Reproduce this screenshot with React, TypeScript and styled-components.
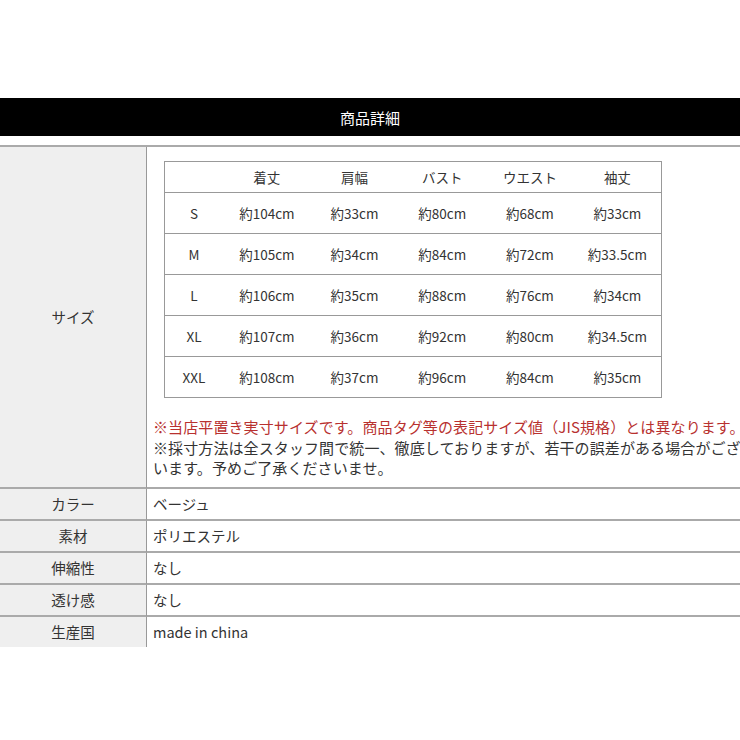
import styled, { createGlobalStyle } from "styled-components";

const Global = createGlobalStyle`
  body {
    margin: 0;
    background: #fff;
    font-family: "Noto Sans CJK JP", "Liberation Sans", sans-serif;
    color: #333;
  }
`;

const Page = styled.div`
  padding-top: 98px;
  width: 740px;
`;

const Title = styled.div`
  background: #000;
  color: #fff;
  height: 38px;
  display: flex;
  align-items: center;
  justify-content: center;
  font-size: 15px;
  margin-bottom: 9px;
`;

const Spec = styled.div`
  display: grid;
  grid-template-columns: 147px 1fr;
  border-top: 2px solid #aaa;
`;

const Label = styled.div<{ $last?: boolean }>`
  background: #efefef;
  border-right: 1px solid #999;
  border-bottom: ${({ $last }) => ($last ? "none" : "2px solid #aaa")};
  display: flex;
  align-items: center;
  justify-content: center;
  font-size: 14.5px;
`;

const Value = styled.div<{ $last?: boolean }>`
  border-bottom: ${({ $last }) => ($last ? "none" : "2px solid #aaa")};
  height: 30px;
  display: flex;
  align-items: center;
  padding-left: 6px;
  font-size: 14.5px;
`;

const SizeCell = styled.div`
  border-bottom: 2px solid #aaa;
  padding: 14px 0 8px 6px;
`;

const SizeTable = styled.table`
  margin-left: 11px;
  width: 498px;
  table-layout: fixed;
  border-collapse: collapse;
  border: 1px solid #999;
  font-size: 13.5px;
  td, th {
    font-weight: normal;
    text-align: center;
    padding: 0;
  }
  th { height: 30px; }
  td { height: 40px; border-top: 1px solid #999; }
  td:first-child, th:first-child { width: 58px; }
`;

const Notes = styled.div`
  margin-top: 19px;
  font-size: 15px;
  line-height: 20.5px;
  letter-spacing: 0.1px;
  padding-right: 4px;
`;

const Red = styled.div`
  color: #b8312f;
  white-space: nowrap;
`;

const heads = ["", "着丈", "肩幅", "バスト", "ウエスト", "袖丈"];
const rows = [
  ["S", "約104cm", "約33cm", "約80cm", "約68cm", "約33cm"],
  ["M", "約105cm", "約34cm", "約84cm", "約72cm", "約33.5cm"],
  ["L", "約106cm", "約35cm", "約88cm", "約76cm", "約34cm"],
  ["XL", "約107cm", "約36cm", "約92cm", "約80cm", "約34.5cm"],
  ["XXL", "約108cm", "約37cm", "約96cm", "約84cm", "約35cm"],
];
const info = [
  ["カラー", "ベージュ"],
  ["素材", "ポリエステル"],
  ["伸縮性", "なし"],
  ["透け感", "なし"],
  ["生産国", "made in china"],
];

export default function App() {
  return (
    <Page>
      <Global />
      <Title>商品詳細</Title>
      <Spec>
        <Label>サイズ</Label>
        <SizeCell>
          <SizeTable>
            <thead>
              <tr>{heads.map((h, i) => <th key={i}>{h}</th>)}</tr>
            </thead>
            <tbody>
              {rows.map((r) => (
                <tr key={r[0]}>{r.map((c, i) => <td key={i}>{c}</td>)}</tr>
              ))}
            </tbody>
          </SizeTable>
          <Notes>
            <Red>※当店平置き実寸サイズです。商品タグ等の表記サイズ値（JIS規格）とは異なります。</Red>
            <div>※採寸方法は全スタッフ間で統一、徹底しておりますが、若干の誤差がある場合がございます。予めご了承くださいませ。</div>
          </Notes>
        </SizeCell>
        {info.map(([k, v], i) => [
          <Label key={k} $last={i === info.length - 1}>{k}</Label>,
          <Value key={k + "v"} $last={i === info.length - 1}>{v}</Value>,
        ])}
      </Spec>
    </Page>
  );
}
